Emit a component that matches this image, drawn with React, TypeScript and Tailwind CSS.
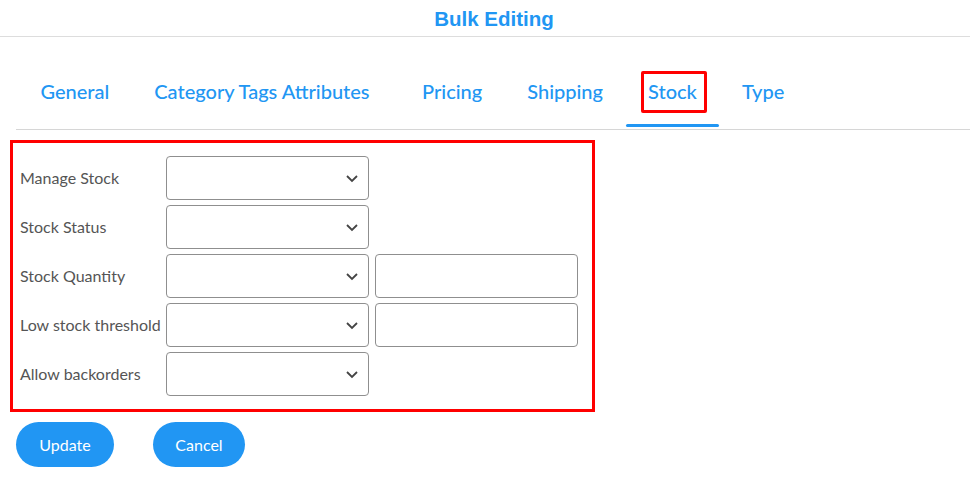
import React from "react";

const tabs = ["General", "Category Tags Attributes", "Pricing", "Shipping", "Stock", "Type"];

function Chevron() {
  return (
    <svg width="14" height="14" viewBox="0 0 14 14" className="absolute right-[9px] top-1/2 -translate-y-1/2">
      <path d="M2 5 L7 10 L12 5" fill="none" stroke="#444" strokeWidth="1.8" />
    </svg>
  );
}

function Select() {
  return (
    <div className="relative shrink-0 w-[203px] h-[44px] border border-[#8f8f8f] rounded-[4px] bg-white">
      <Chevron />
    </div>
  );
}

function Input() {
  return <div className="shrink-0 w-[203px] h-[44px] border border-[#8f8f8f] rounded-[4px] bg-white" />;
}

const rows: { label: string; input: boolean }[] = [
  { label: "Manage Stock", input: false },
  { label: "Stock Status", input: false },
  { label: "Stock Quantity", input: true },
  { label: "Low stock threshold", input: true },
  { label: "Allow backorders", input: false },
];

export default function App() {
  return (
    <div className="w-[970px] h-[484px] bg-white font-['Lato',sans-serif] overflow-hidden">
      <div className="h-[37px] border-b border-[#dddddd] flex justify-center pt-[6px]">
        <span className="font-['Liberation_Sans',sans-serif] font-bold text-[20.5px] text-[#2196f3] leading-[26px] ml-[18px]">
          Bulk Editing
        </span>
      </div>
      <div className="ml-[16px] mt-[17px] border-b border-[#d6d6d6] flex h-[76px] pl-[2px]">
        {tabs.map((t) => (
          <div
            key={t}
            className={`relative pt-[24px] text-[20px] font-medium text-[#2196f3] leading-[26px] ${
              t === "Category Tags Attributes" ? "pl-[22.5px] pr-[30px]" : "px-[22.5px]"
            }`}
          >
            {t === "Stock" ? (
              <span className="absolute left-[15px] right-[12px] top-[17px] h-[42px] border-[3px] border-[#ff0000] rounded-[2px]" />
            ) : null}
            <span className="relative">{t}</span>
            {t === "Stock" ? (
              <span className="absolute left-0 right-0 bottom-[2px] h-[3px] rounded-full bg-[#2196f3]" />
            ) : null}
          </div>
        ))}
      </div>
      <div className="ml-[10px] mt-[10px] w-[585px] h-[272px] border-[3px] border-[#ff0000] pt-[13px] pl-[7px] flex flex-col gap-[5px]">
        {rows.map((r) => (
          <div key={r.label} className="flex items-center gap-[6px]">
            <div className="w-[140px] shrink-0 text-[16px] text-[#555555] whitespace-nowrap">{r.label}</div>
            <Select />
            {r.input ? <Input /> : null}
          </div>
        ))}
      </div>
      <div className="flex gap-[39px] ml-[16px] mt-[10px]">
        <button className="w-[98px] h-[45px] rounded-full bg-[#2196f3] text-white text-[16px]">Update</button>
        <button className="w-[92px] h-[45px] rounded-full bg-[#2196f3] text-white text-[16px]">Cancel</button>
      </div>
    </div>
  );
}
